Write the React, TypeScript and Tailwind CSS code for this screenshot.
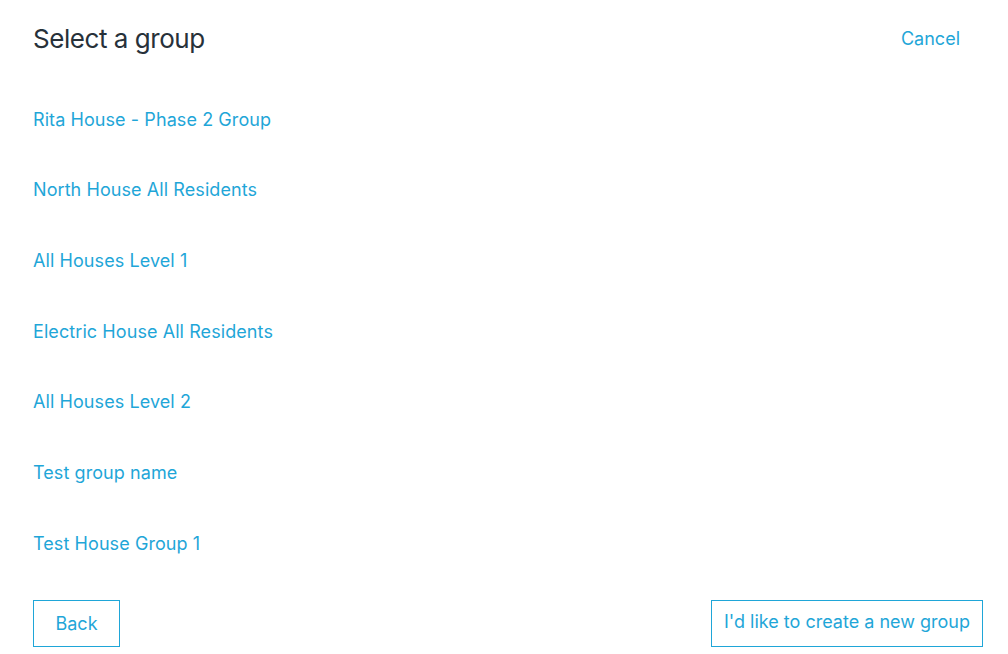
import React from "react";

const groups = [
  "Rita House - Phase 2 Group",
  "North House All Residents",
  "All Houses Level 1",
  "Electric House All Residents",
  "All Houses Level 2",
  "Test group name",
  "Test House Group 1",
];

export default function App() {
  return (
    <div
      className="w-[1008px] h-[654px] bg-white pl-[33px] pr-[25px] flex flex-col"
      style={{ fontFamily: "Inter, 'Noto Sans', sans-serif" }}
    >
      <div className="h-[77px] flex items-center justify-between">
        <h1 className="text-[26px] text-[#27313a] font-normal tracking-[-0.45px]">Select a group</h1>
        <button className="text-[18px] text-[#1fa6d8] mr-[23px]">Cancel</button>
      </div>
      <ul className="mt-[7px] flex flex-col">
        {groups.map((g) => (
          <li key={g} className="h-[70.67px] flex items-center">
            <a className="text-[18px] text-[#1fa6d8] tracking-[0.08px] cursor-pointer">{g}</a>
          </li>
        ))}
      </ul>
      <div className="mt-[21px] flex justify-between">
        <button className="h-[47px] w-[87px] border border-[#1fa6d8] text-[18px] text-[#1fa6d8]">Back</button>
        <button className="h-[47px] w-[272px] border border-[#1fa6d8] text-[18px] text-[#1fa6d8] pb-[4px]">I'd like to create a new group</button>
      </div>
    </div>
  );
}
